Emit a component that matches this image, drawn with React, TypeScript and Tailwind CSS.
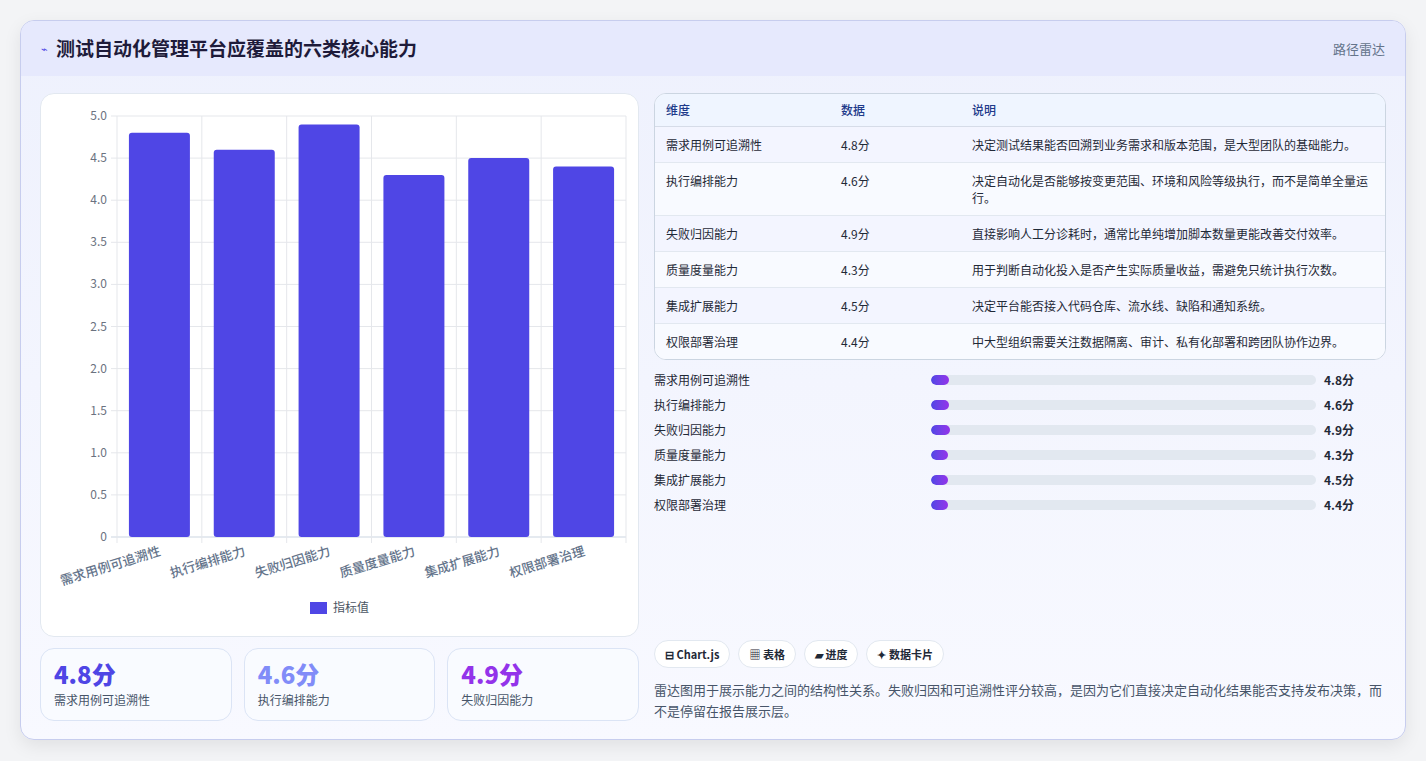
import React from "react";

const rows = [
  { n: "需求用例可追溯性", v: 4.8, d: "决定测试结果能否回溯到业务需求和版本范围，是大型团队的基础能力。" },
  { n: "执行编排能力", v: 4.6, d: "决定自动化是否能够按变更范围、环境和风险等级执行，而不是简单全量运行。" },
  { n: "失败归因能力", v: 4.9, d: "直接影响人工分诊耗时，通常比单纯增加脚本数量更能改善交付效率。" },
  { n: "质量度量能力", v: 4.3, d: "用于判断自动化投入是否产生实际质量收益，需避免只统计执行次数。" },
  { n: "集成扩展能力", v: 4.5, d: "决定平台能否接入代码仓库、流水线、缺陷和通知系统。" },
  { n: "权限部署治理", v: 4.4, d: "中大型组织需要关注数据隔离、审计、私有化部署和跨团队协作边界。" },
];

const font = { fontFamily: '"Noto Sans CJK SC", "Noto Sans", sans-serif' };

function Chart() {
  const L = 76, R = 585, T = 22, B = 443;
  const cw = (R - L) / 6;
  const y = (v: number) => B - (v / 5) * (B - T);
  const ticks = [0, 0.5, 1, 1.5, 2, 2.5, 3, 3.5, 4, 4.5, 5];
  return (
    <svg width="598" height="543" style={font}>
      {ticks.map((t) => (
        <g key={t}>
          <line x1={L - 6} x2={R} y1={y(t)} y2={y(t)} stroke={t === 0 ? "#cbd5e1" : "#e5e7eb"} />
          <text x={L - 10} y={y(t) + 4} textAnchor="end" fontSize="12" fill="#6b7280">
            {t === 0 ? "0" : t.toFixed(1)}
          </text>
        </g>
      ))}
      {Array.from({ length: 7 }).map((_, i) => (
        <line key={i} x1={L + i * cw} x2={L + i * cw} y1={T} y2={B + 6} stroke="#e5e7eb" />
      ))}
      {rows.map((r, i) => {
        const cx = L + i * cw + cw / 2;
        return (
          <g key={r.n}>
            <rect x={cx - 30.5} y={y(r.v)} width="61" height={B - y(r.v)} rx="3" fill="#4f46e5" />
            <text
              x={cx + 2}
              y={B + 18}
              textAnchor="end"
              fontSize="13"
              fontWeight="500"
              fill="#64748b"
              transform={`rotate(-17 ${cx + 2} ${B + 18})`}
            >
              {r.n}
            </text>
          </g>
        );
      })}
      <rect x="269" y="508" width="17" height="12" fill="#4f46e5" />
      <text x="292" y="518" fontSize="12" fill="#4b5563">指标值</text>
    </svg>
  );
}

export default function App() {
  const stats = [
    { v: "4.8分", n: "需求用例可追溯性", c: "text-[#4f46e5]" },
    { v: "4.6分", n: "执行编排能力", c: "text-[#818cf8]" },
    { v: "4.9分", n: "失败归因能力", c: "text-[#9333ea]" },
  ];
  return (
    <div className="w-[1426px] h-[761px] bg-[#f3f4f6] pt-[20px] pl-[20px]" style={font}>
      <div className="w-[1386px] h-[720px] rounded-[14px] border border-[#c7cdee] bg-gradient-to-b from-[#eef1fd] to-[#f8f9ff] shadow-[0_6px_18px_rgba(0,0,0,0.08)] overflow-hidden flex flex-col">
        <div className="h-[55px] shrink-0 bg-[#e6e9fd] flex items-center justify-between px-[20px]">
          <div className="flex items-center gap-[8px]">
            <span className="text-[#4f46e5] text-[11px]">⌁</span>
            <span className="text-[19px] font-bold text-[#1e1b3a]">测试自动化管理平台应覆盖的六类核心能力</span>
          </div>
          <span className="text-[13px] text-[#64748b]">路径雷达</span>
        </div>
        <div className="flex-1 flex gap-[15px] px-[19px] pt-[17px] pb-[18px]">
          <div className="w-[599px] flex flex-col gap-[11px]">
            <div className="h-[544px] bg-white rounded-[14px] border border-[#e2e8f0]">
              <Chart />
            </div>
            <div className="grid grid-cols-3 gap-[12px] h-[73px]">
              {stats.map((s) => (
                <div key={s.n} className="rounded-[14px] border border-[#dbe4f5] bg-[#f9fbff] px-[13px] pt-[10px]">
                  <div className={`text-[24px] font-extrabold leading-[30px] ${s.c}`}>{s.v}</div>
                  <div className="text-[12px] text-[#475569] mt-[2px]">{s.n}</div>
                </div>
              ))}
            </div>
          </div>
          <div className="flex-1 flex flex-col">
            <div className="rounded-[12px] border border-[#cbd5e1] bg-white overflow-hidden text-[12px]">
              <div className="flex h-[33px] items-center bg-[#eff5ff] border-b border-[#d6dce8] text-[#1e3a8a] font-medium">
                <div className="w-[186px] pl-[11px]">维度</div>
                <div className="w-[131px]">数据</div>
                <div className="flex-1">说明</div>
              </div>
              {rows.map((r, i) => (
                <div
                  key={r.n}
                  className={`flex py-[9px] text-[#1f2937] ${i % 2 === 0 ? "bg-[#f3f5ff]" : "bg-[#f8faff]"} ${i < 5 ? "border-b border-[#e2e8f0]" : ""}`}
                >
                  <div className="w-[186px] pl-[11px] leading-[17px]">{r.n}</div>
                  <div className="w-[131px] leading-[17px]">{r.v.toFixed(1)}分</div>
                  <div className="flex-1 pr-[14px] leading-[17px]">{r.d}</div>
                </div>
              ))}
            </div>
            <div className="mt-[11px] flex flex-col gap-[7px]">
              {rows.map((r) => (
                <div key={r.n} className="flex items-center h-[18px] text-[12px]">
                  <div className="w-[277px] text-[#1f2937]">{r.n}</div>
                  <div className="w-[385px] h-[10px] rounded-full bg-[#e2e8f0] overflow-hidden">
                    <div className="h-full rounded-full bg-gradient-to-r from-[#4f46e5] to-[#9333ea]" style={{ width: `${r.v}%` }} />
                  </div>
                  <div className="ml-[8px] font-bold text-[#1f2937]">{r.v.toFixed(1)}分</div>
                </div>
              ))}
            </div>
            <div className="mt-auto flex gap-[8px]">
              {["⊟ Chart.js", "▦ 表格", "▰ 进度", "✦ 数据卡片"].map((c) => (
                <span key={c} className="h-[28px] px-[10px] rounded-full border border-[#e2e8f0] bg-white flex items-center text-[11px] font-semibold text-[#1f2937]">
                  {c}
                </span>
              ))}
            </div>
            <p className="mt-[11px] text-[13px] leading-[21px] text-[#475569]">
              雷达图用于展示能力之间的结构性关系。失败归因和可追溯性评分较高，是因为它们直接决定自动化结果能否支持发布决策，而不是停留在报告展示层。
            </p>
          </div>
        </div>
      </div>
    </div>
  );
}
